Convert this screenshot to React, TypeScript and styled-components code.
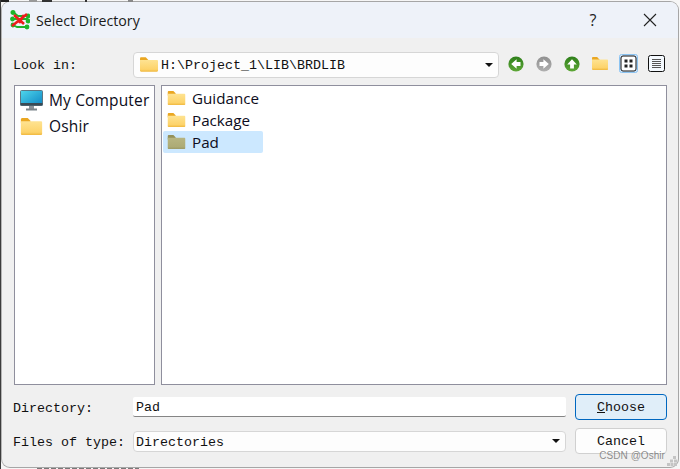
import React from "react";
import styled, { createGlobalStyle } from "styled-components";

const Global = createGlobalStyle`
  html, body { margin: 0; padding: 0; background: #f4f4f4; }
  #root { width: 680px; height: 469px; overflow: hidden; }
`;

const Stage = styled.div`
  position: relative;
  width: 680px;
  height: 469px;
  overflow: hidden;
  background: #f6f6f6;
  border-left: 1px solid #3c3c3c;
  padding: 1px 0 0 0;
  box-sizing: border-box;
`;

const Dialog = styled.div`
  width: 678px;
  height: 467px;
  box-sizing: border-box;
  background: #f0f0f0;
  border-radius: 9px;
  border: 1px solid #a6a6a6;
  border-left-color: #b4b4b4;
  overflow: hidden;
  display: flex;
  flex-direction: column;
`;

const TitleBar = styled.div`
  height: 36px;
  flex: none;
  background: #eef2f9;
  display: flex;
  align-items: center;
  padding-left: 8px;
`;

const AppIcon = styled.svg`
  width: 20px;
  height: 20px;
  flex: none;
`;

const TitleText = styled.span`
  margin-left: 6px;
  font: 14.2px "Open Sans", "Noto Sans", sans-serif;
  color: #1a1a1a;
  flex: 1;
`;

const Help = styled.span`
  font: 16px "Open Sans", sans-serif;
  color: #222;
  width: 12px;
  margin-right: 44px;
  text-align: center;
`;

const CloseIcon = styled.svg`
  width: 14px;
  height: 14px;
  margin-right: 21px;
`;

const Body = styled.div`
  flex: 1;
  display: flex;
  flex-direction: column;
  padding: 13px 12px 0 11px;
  font: 13.33px "Liberation Mono", monospace;
  color: #111;
`;

const TopRow = styled.div`
  height: 27px;
  display: flex;
  align-items: center;
`;

const FieldLabel = styled.span`
  width: 120px;
  flex: none;
  padding-top: 2px;
  white-space: pre;
`;

const Combo = styled.div<{ $w: number; $h: number }>`
  width: ${(p) => p.$w}px;
  height: ${(p) => p.$h}px;
  flex: none;
  box-sizing: border-box;
  background: #fdfdfd;
  border: 1px solid #d6d6d6;
  border-radius: 4px;
  display: flex;
  align-items: center;
  padding: 0 5px 0 2px;
`;

const PathFolder = styled.span`
  display: flex;
  margin: 0 3px 0 4px;
`;

const ComboText = styled.span`
  flex: 1;
  padding-top: 2px;
  white-space: pre;
`;

const Caret = styled.span`
  width: 0;
  height: 0;
  border-left: 4px solid transparent;
  border-right: 4px solid transparent;
  border-top: 4px solid #111;
`;

const ToolButtons = styled.div`
  display: flex;
  align-items: center;
  margin-left: 3px;
  position: relative;
  top: -1px;
`;

const Slot = styled.span`
  width: 28px;
  flex: none;
  display: flex;
  justify-content: center;
  align-items: center;
`;

const ViewBtn = styled.svg`
  width: 19px;
  height: 19px;
  display: block;
`;

const Panes = styled.div`
  margin: 7px 0 0 1px;
  height: 300px;
  display: flex;
  gap: 6px;
`;

const Pane = styled.div<{ $w: number }>`
  width: ${(p) => p.$w}px;
  flex: none;
  box-sizing: border-box;
  background: #fff;
  border: 1px solid #8f8f9d;
  padding: 1px 0 0 1px;
`;

const SideItem = styled.div`
  height: 26px;
  display: flex;
  align-items: center;
  padding-left: 4px;
  font: 15.5px "Open Sans", "Noto Sans", sans-serif;
  letter-spacing: 0.15px;
  color: #0c0c20;
`;

const FileItem = styled.div<{ $sel?: boolean }>`
  width: 100px;
  height: 22px;
  box-sizing: border-box;
  display: flex;
  align-items: center;
  padding-left: 4px;
  border-radius: 2px;
  background: ${(p) => (p.$sel ? "#cce8ff" : "transparent")};
  font: 15.2px "Open Sans", "Noto Sans", sans-serif;
  color: #0c0c20;
`;

const ItemLabel = styled.span`
  margin-left: 6px;
`;

const BottomGrid = styled.div`
  margin-top: 5px;
  display: grid;
  grid-template-columns: 120px 433px 101px;
  grid-auto-rows: 34px;
  align-items: center;
`;

const DirInput = styled.div`
  height: 20px;
  box-sizing: border-box;
  background: #fff;
  border-bottom: 1px solid #858585;
  border-radius: 2px;
  padding: 1px 0 0 3px;
  line-height: 19px;
  white-space: pre;
`;

const ActionButton = styled.button<{ $primary?: boolean }>`
  margin-left: 9px;
  width: 92px;
  height: 26px;
  box-sizing: border-box;
  border-radius: 4px;
  padding: 0;
  font: 13.33px "Liberation Mono", monospace;
  color: #111;
  background: ${(p) => (p.$primary ? "#e0eef9" : "#fdfdfd")};
  border: 1px solid ${(p) => (p.$primary ? "#0067c0" : "#d0d0d0")};
`;

const Under = styled.span`
  text-decoration: underline;
`;

const Watermark = styled.div`
  position: absolute;
  right: 15px;
  bottom: 8px;
  font: 10px "Liberation Sans", sans-serif;
  color: rgba(95, 95, 95, 0.7);
  letter-spacing: 0.05px;
`;

const Grip = styled.svg`
  position: absolute;
  right: 3px;
  bottom: 3px;
  width: 10px;
  height: 10px;
`;

const BackdropTop = styled.svg`
  position: absolute;
  left: 0;
  top: 0;
  width: 160px;
  height: 2px;
`;

const BackdropBottom = styled.div`
  position: absolute;
  left: 36px;
  bottom: 0;
  width: 102px;
  height: 1px;
  background: repeating-linear-gradient(90deg, #777 0 5px, transparent 5px 7px);
`;

const Folder = ({ sel, w = 20, h = 16 }: { sel?: boolean; w?: number; h?: number }) => (
  <svg width={w} height={h} viewBox="0 0 20 16" style={{ flex: "none" }}>
    <defs>
      <linearGradient id="fld" x1="0" y1="0" x2="0" y2="1">
        <stop offset="0" stopColor="#fee392" />
        <stop offset="0.8" stopColor="#fdd36a" />
        <stop offset="1" stopColor="#f0b83e" />
      </linearGradient>
      <linearGradient id="flds" x1="0" y1="0" x2="0" y2="1">
        <stop offset="0" stopColor="#b7b582" />
        <stop offset="0.8" stopColor="#adab75" />
        <stop offset="1" stopColor="#9c9a66" />
      </linearGradient>
    </defs>
    <path d="M0 1.4C0 .6.6 0 1.4 0h5l2.6 2.6V5H0z" fill={sel ? "#94915a" : "#eaa722"} />
    <path d="M0 3h18.8c.7 0 1.2.5 1.2 1.2v10.6c0 .7-.5 1.2-1.2 1.2H1.2C.5 16 0 15.5 0 14.8z" fill={sel ? "url(#flds)" : "url(#fld)"} />
  </svg>
);

const Monitor = () => (
  <svg width="23" height="21" viewBox="0 0 23 21" style={{ flex: "none" }}>
    <defs>
      <linearGradient id="scr" x1="0" y1="0" x2="1" y2="1">
        <stop offset="0" stopColor="#4fd6ec" />
        <stop offset="1" stopColor="#0d86c4" />
      </linearGradient>
    </defs>
    <rect x="0.5" y="0.5" width="22" height="15" rx="1" fill="url(#scr)" stroke="#5b7684" />
    <rect x="0.5" y="13" width="22" height="2.5" fill="#3a4a54" />
    <rect x="9" y="16" width="5" height="3" fill="#8a9298" />
    <rect x="6" y="18.5" width="11" height="2" fill="#7b848a" />
  </svg>
);

const Nav = ({ id, hi, lo, dir }: { id: string; hi: string; lo: string; dir: "l" | "r" | "u" }) => {
  const rot = dir === "l" ? 0 : dir === "r" ? 180 : 90;
  return (
    <svg width="16" height="16" viewBox="0 0 16 16">
      <defs>
        <linearGradient id={id} x1="0" y1="0" x2="0" y2="1">
          <stop offset="0" stopColor={hi} />
          <stop offset="1" stopColor={lo} />
        </linearGradient>
      </defs>
      <circle cx="8" cy="8" r="7.6" fill={`url(#${id})`} />
      <path d="M8.6 3.2 3.2 8l5.4 4.8V9.9h3.9V6.1H8.6z" fill="#fff" transform={`rotate(${rot} 8 8)`} />
    </svg>
  );
};

export default function App() {
  return (
    <Stage>
      <Global />
      <BackdropTop viewBox="0 0 160 2">
        <rect x="0" y="0" width="8" height="2" fill="#222" />
        <rect x="28" y="0" width="8" height="2" fill="#999" />
        <rect x="41" y="0" width="10" height="2" fill="#333" />
        <rect x="84" y="0" width="2" height="2" fill="#333" />
        <rect x="127" y="0" width="5" height="2" fill="#888" />
      </BackdropTop>
      <Dialog>
        <TitleBar>
          <AppIcon viewBox="0 0 20 20">
            <g stroke="#1fb52a" strokeWidth="1.8" fill="#1fb52a">
              <path d="M3 2 8 6h10M2 9h16M3 15l4 2h11" fill="none" />
              <circle cx="3" cy="2.5" r="1.6" />
              <circle cx="18" cy="6" r="1.5" />
              <circle cx="2.5" cy="9" r="1.5" />
              <circle cx="18" cy="11" r="1.5" />
              <circle cx="3" cy="15" r="1.5" />
              <circle cx="17" cy="17" r="1.5" />
            </g>
            <path d="M2 16 17 4M4 5l10 9M9 13l5-8" stroke="#ee1c1c" strokeWidth="2.6" fill="none" />
          </AppIcon>
          <TitleText>Select Directory</TitleText>
          <Help>?</Help>
          <CloseIcon viewBox="0 0 14 14">
            <path d="M1 1l12 12M13 1 1 13" stroke="#222" strokeWidth="1.1" fill="none" />
          </CloseIcon>
        </TitleBar>
        <Body>
          <TopRow>
            <FieldLabel>Look in:</FieldLabel>
            <Combo $w={366} $h={26}>
              <PathFolder><Folder w={18} h={15} /></PathFolder>
              <ComboText>H:\Project_1\LIB\BRDLIB</ComboText>
              <Caret />
            </Combo>
            <ToolButtons>
              <Slot><Nav id="n1" hi="#2e7f1a" lo="#5fa838" dir="l" /></Slot>
              <Slot><Nav id="n2" hi="#909090" lo="#b0b0b0" dir="r" /></Slot>
              <Slot><Nav id="n3" hi="#2e7f1a" lo="#5fa838" dir="u" /></Slot>
              <Slot><Folder w={16} h={13} /></Slot>
              <Slot>
                <ViewBtn viewBox="0 0 19 19">
                  <rect x="0.5" y="0.5" width="18" height="18" rx="2" fill="#cfe6fb" stroke="#8cc4f2" />
                  <rect x="2" y="2" width="15" height="15" rx="2" fill="#fff" stroke="#111" />
                  <rect x="5.5" y="5.5" width="3" height="3" fill="#222" />
                  <rect x="10.5" y="5.5" width="3" height="3" fill="#222" />
                  <rect x="5.5" y="10.5" width="3" height="3" fill="#222" />
                  <rect x="10.5" y="10.5" width="3" height="3" fill="#222" />
                </ViewBtn>
              </Slot>
              <Slot>
                <ViewBtn viewBox="0 0 19 19">
                  <rect x="1.5" y="1.5" width="16" height="16" rx="2" fill="#f4f9fe" stroke="#111" />
                  <path d="M5 5.5h9M5 7.5h9M5 9.5h9M5 11.5h9M5 13.5h9" stroke="#555" strokeWidth="1" />
                </ViewBtn>
              </Slot>
            </ToolButtons>
          </TopRow>
          <Panes>
            <Pane $w={141}>
              <SideItem><Monitor /><ItemLabel>My Computer</ItemLabel></SideItem>
              <SideItem><Folder w={23} h={17} /><ItemLabel>Oshir</ItemLabel></SideItem>
            </Pane>
            <Pane $w={506}>
              <FileItem><Folder w={19} h={14} /><ItemLabel>Guidance</ItemLabel></FileItem>
              <FileItem><Folder w={19} h={14} /><ItemLabel>Package</ItemLabel></FileItem>
              <FileItem $sel><Folder sel w={19} h={14} /><ItemLabel>Pad</ItemLabel></FileItem>
            </Pane>
          </Panes>
          <BottomGrid>
            <FieldLabel>Directory:</FieldLabel>
            <DirInput>Pad</DirInput>
            <ActionButton $primary><Under>C</Under>hoose</ActionButton>
            <FieldLabel>Files of type:</FieldLabel>
            <Combo $w={433} $h={21}>
              <ComboText>Directories</ComboText>
              <Caret />
            </Combo>
            <ActionButton>Cancel</ActionButton>
          </BottomGrid>
        </Body>
      </Dialog>
      <Watermark>CSDN @Oshir</Watermark>
      <Grip viewBox="0 0 10 10">
        <g fill="#c4c4c4">
          <rect x="6" y="0" width="3" height="3" />
          <rect x="3" y="3.5" width="3" height="3" />
          <rect x="7" y="3.5" width="3" height="3" />
          <rect x="0" y="7" width="3" height="3" />
          <rect x="3.5" y="7" width="3" height="3" />
          <rect x="7" y="7" width="3" height="3" />
        </g>
      </Grip>
      <BackdropBottom />
    </Stage>
  );
}
